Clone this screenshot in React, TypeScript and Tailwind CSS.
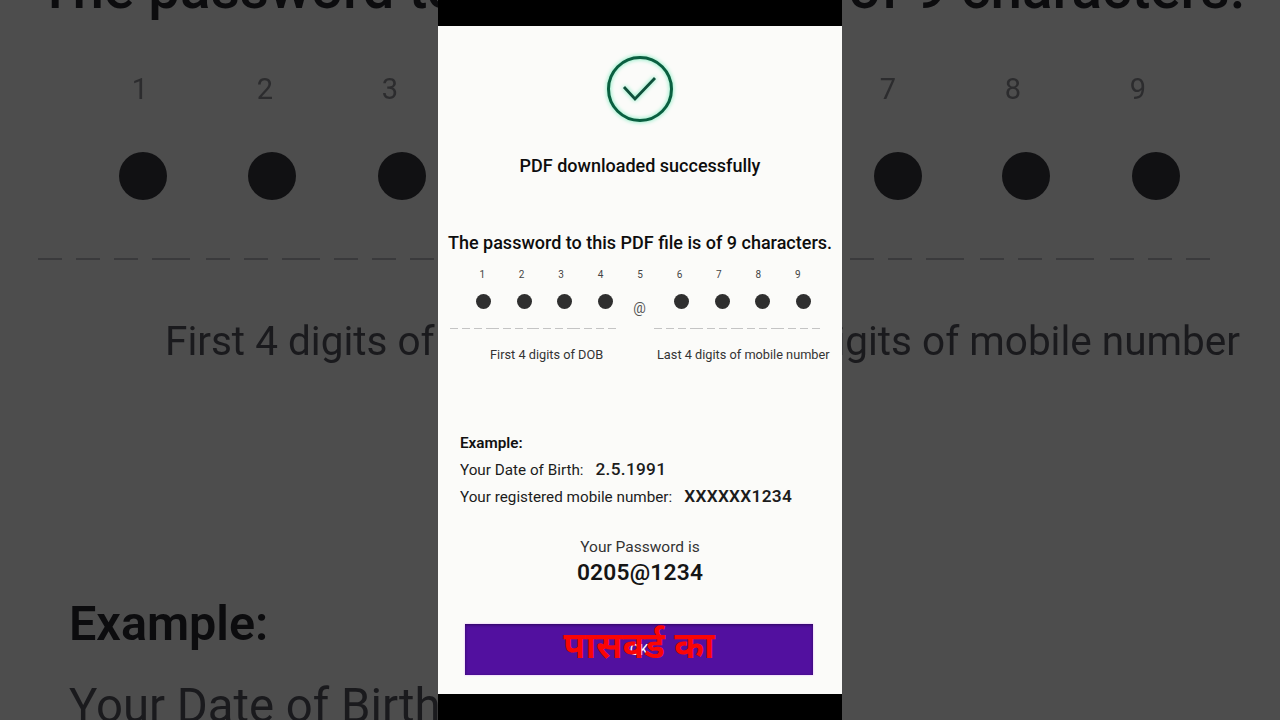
import React from 'react';

const short = 8;
const long = 12.5;
const dashes = [short, short, short, long, short, short, long, short, short, long, short, short, short];

function DashRow() {
  return (
    <div className="flex w-[166px] gap-[4px]">
      {dashes.map((w, i) => (
        <div key={i} className="h-px bg-[#c4c4c4]" style={{ width: w }} />
      ))}
    </div>
  );
}

function Dot() {
  return <div className="h-[15px] w-[15px] rounded-full bg-[#2f2f2f]" />;
}

// blurred, dimmed zoom of the same frame behind the phone video
function BackdropFrame() {
  const dots = [143, 272, 402, 898, 1026, 1156];
  const nums = [
    ['1', 140],
    ['2', 265],
    ['3', 390],
    ['7', 888],
    ['8', 1013],
    ['9', 1138],
  ] as const;
  const bgDashes = [38, 76, 114, 152, 206, 244, 282, 334, 372, 410, 850, 888, 926, 980, 1018, 1056, 1110, 1148, 1186];
  const longs = [152, 282, 926, 1056];

  return (
    <div className="absolute inset-0 bg-[#4d4d4d] text-[#1a1a1d] blur-[0.7px]">
      <div className="absolute left-[38px] top-[-41px] whitespace-nowrap text-[56.6px] font-medium leading-[60px] text-[#0c0c0e]">
        The password to this PDF file is of 9 characters.
      </div>
      {nums.map(([n, x]) => (
        <div key={n} className="absolute top-[72px] w-[30px] -translate-x-1/2 text-center text-[29px] leading-[34px] text-[#2c2c2e]" style={{ left: x }}>
          {n}
        </div>
      ))}
      {dots.map((x) => (
        <div key={x} className="absolute top-[152px] h-[48px] w-[48px] -translate-x-1/2 rounded-full bg-[#111113]" style={{ left: x }} />
      ))}
      {bgDashes.map((x) => (
        <div key={x} className="absolute top-[258px] h-[2px] bg-[#3a3a3c]" style={{ left: x, width: longs.includes(x) ? 38 : 24 }} />
      ))}
      <div className="absolute left-[165px] top-[318px] whitespace-nowrap text-[40.5px] leading-[46px]">First 4 digits of</div>
      <div className="absolute right-[40px] top-[318px] whitespace-nowrap text-[40.5px] leading-[46px]">Last 4 digits of mobile number</div>
      <div className="absolute left-[69px] top-[599px] whitespace-nowrap text-[48.5px] font-semibold leading-[50px] text-[#0c0c0e]">Example:</div>
      <div className="absolute left-[69px] top-[681px] whitespace-nowrap text-[47.3px] leading-[50px]">Your Date of Birth</div>
    </div>
  );
}

export default function App() {
  return (
    <div className="relative flex h-[720px] w-[1280px] justify-center overflow-hidden bg-[#4d4d4d] font-['Roboto',sans-serif]">
      <BackdropFrame />

      <div className="relative flex h-full w-[404px] flex-col bg-black py-[26px]">
        <div className="flex h-full flex-col items-center bg-[#fbfbf9] text-[#111]">
          <svg viewBox="0 0 66 66" className="mt-[30px] h-[66px] w-[66px] drop-shadow-[0_0_2px_#5fe8b0]">
            <circle cx="33" cy="33" r="31.5" fill="none" stroke="#0a5f40" strokeWidth="3" />
            <path d="M17 31 L28 43 L48 22" fill="none" stroke="#10503b" strokeWidth="2.8" />
          </svg>

          <h1 className="mt-[34px] text-[18px] font-medium leading-[20px] text-[#0d0d0d]">PDF downloaded successfully</h1>

          <h2 className="mt-[57px] whitespace-nowrap text-[18px] font-medium leading-[20px] text-[#0d0d0d]">
            The password to this PDF file is of 9 characters.
          </h2>

          <div className="mt-[15px] grid w-[355px] grid-cols-9 text-center text-[10px] leading-[14px] text-[#444]">
            {[1, 2, 3, 4, 5, 6, 7, 8, 9].map((n) => (
              <div key={n}>{n}</div>
            ))}
          </div>

          <div className="mt-[12px] ml-[38px] flex h-[22px] w-[335px] items-start self-start">
            <div className="flex w-[137px] justify-between">
              {[0, 1, 2, 3].map((i) => (
                <Dot key={i} />
              ))}
            </div>
            <div className="flex h-[22px] flex-1 items-end justify-center pr-[8px] text-[14px] leading-[16px] text-[#555]">@</div>
            <div className="flex w-[137px] justify-between">
              {[0, 1, 2, 3].map((i) => (
                <Dot key={i} />
              ))}
            </div>
          </div>

          <div className="mt-[12px] ml-[12px] flex w-[370px] justify-between self-start">
            <DashRow />
            <DashRow />
          </div>

          <div className="mt-[18px] flex w-[404px] text-[12.75px] leading-[16px] text-[#333]">
            <div className="ml-[52px] w-[167px] whitespace-nowrap">First 4 digits of DOB</div>
            <div className="whitespace-nowrap">Last 4 digits of mobile number</div>
          </div>

          <div className="mt-[67px] flex w-full flex-col pl-[22px] text-[15.25px] leading-[26px] text-[#1c1c1c]">
            <div className="font-semibold text-[#111]">Example:</div>
            <div className="flex items-baseline">
              Your Date of Birth:<span className="ml-[12px] text-[17.25px] font-medium tracking-[0.3px]">2.5.1991</span>
            </div>
            <div className="flex items-baseline">
              Your registered mobile number:<span className="ml-[12px] text-[17.25px] font-semibold tracking-[0.3px]">XXXXXX1234</span>
            </div>
          </div>

          <div className="mt-[28px] text-[15.5px] leading-[18px] text-[#333]">Your Password is</div>
          <div className="mt-[3px] text-[22.75px] font-semibold leading-[28px] tracking-[0.2px] text-[#151515]">0205@1234</div>

          <div className="relative mt-[37px] -ml-[2px] flex h-[51px] w-[348px] items-center justify-center bg-[#52109f] shadow-[inset_0_1px_3px_rgba(30,0,70,0.7),0_0_2px_#e6b3ff]">
            <span className="text-[14px] leading-[18px] text-white">OK</span>
            <span className="absolute inset-x-0 top-[-3px] text-center font-['Noto_Sans','DejaVu_Sans',sans-serif] text-[36px] font-bold leading-[48px] text-[#fa0505]">
              पासवर्ड का
            </span>
          </div>
        </div>
      </div>
    </div>
  );
}
